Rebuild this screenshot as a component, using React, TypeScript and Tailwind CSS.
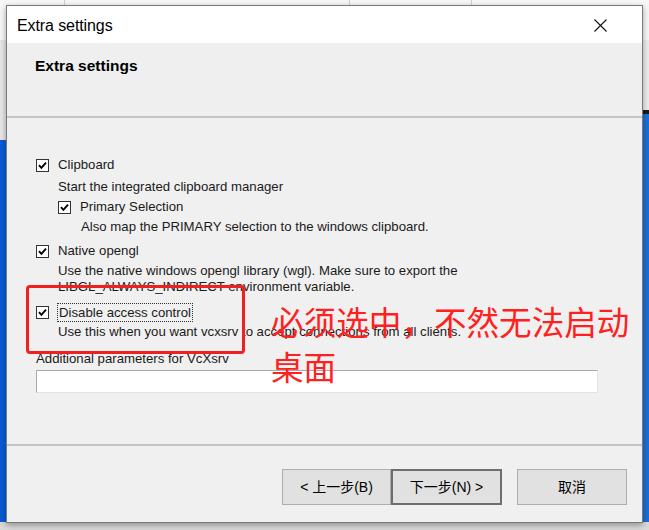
import React from 'react';

const ui = { fontFamily: '"Liberation Sans", Arial, sans-serif' };
const cjk = { fontFamily: '"Liberation Sans", "Noto Sans CJK SC", sans-serif' };

const CheckBox: React.FC = () => (
  <span className="w-[13px] h-[13px] shrink-0 bg-white border border-[#333] flex items-center justify-center">
    <svg width="9" height="9" viewBox="0 0 9 9">
      <path d="M1 4.2 L3.4 6.8 L8 1.6" fill="none" stroke="#000" strokeWidth="1.9" />
    </svg>
  </span>
);

const Option: React.FC<{ label: string; focus?: boolean }> = ({ label, focus }) => (
  <div className="h-[20px] flex items-center">
    <CheckBox />
    <span
      className={
        focus
          ? 'ml-[8px] px-[1px] leading-[17px] border border-dotted border-[#333]'
          : 'ml-[9px] leading-[20px]'
      }
    >
      {label}
    </span>
  </div>
);

const WizButton: React.FC<{ label: string; def?: boolean; w: string }> = ({ label, def, w }) => (
  <button
    className={`${w} h-[36px] flex items-center justify-center bg-[#e1e1e1] text-[14px] text-black ${
      def ? 'border-2 border-[#6e6e6e]' : 'border border-[#adadad]'
    }`}
    style={cjk}
  >
    {label}
  </button>
);

export default function App() {
  return (
    <div className="relative w-[649px] h-[530px] overflow-hidden bg-[#d9d9d9]" style={ui}>
      {/* desktop behind the dialog */}
      <div className="absolute left-0 top-0 w-[649px] h-[40px] bg-[#f7f7f7]">
        <div className="absolute left-[64px] top-0 w-px h-[6px] bg-[#d0d0d0]" />
        <div className="absolute left-[349px] top-0 w-px h-[6px] bg-[#d0d0d0]" />
        <div className="absolute left-[471px] top-0 w-px h-[6px] bg-[#d0d0d0]" />
      </div>
      <div className="absolute left-0 top-[40px] w-[6px] h-[100px] bg-[#e6e6e6]" />
      <div className="absolute left-0 top-[140px] w-[6px] h-[382px] bg-[#0b5bd6]" />
      <div className="absolute right-0 top-[40px] w-[7px] h-[70px] bg-[#ececec]" />
      <div className="absolute right-0 top-[110px] w-[7px] h-[4px] bg-[#1a1a1a]" />
      <div className="absolute right-0 top-[114px] w-[7px] h-[408px] bg-[#1c6fd6]" />

      {/* dialog */}
      <div className="relative ml-[6px] mt-[5px] w-[637px] h-[518px] flex flex-col border border-[#7a7a7a] shadow-[0_2px_6px_rgba(0,0,0,0.35)]">
        <div className="h-[37px] bg-white flex items-center justify-between pl-[10px] pr-[35px] pt-[2px]">
          <span className="text-[16px] text-black tracking-[-0.1px]">Extra settings</span>
          <svg width="13" height="13" viewBox="0 0 13 13">
            <path d="M0.5 0.5 L12.5 12.5 M12.5 0.5 L0.5 12.5" stroke="#111" strokeWidth="1.1" />
          </svg>
        </div>

        <div className="h-[73px] bg-[#efefef] pl-[28px] pt-[11px]">
          <span className="text-[15.5px] font-bold text-black">Extra settings</span>
        </div>
        <div className="h-[2px] bg-[#c4c4c4]" />

        <div className="flex-1 bg-[#f0f0f0] pl-[29px] pt-[37px] text-[13.2px] text-[#1a1a1a]">
          <Option label="Clipboard" />
          <div className="mt-[1px] pl-[22px] leading-[21px]">Start the integrated clipboard manager</div>
          <div className="pl-[22px]">
            <Option label="Primary Selection" />
            <div className="pl-[23px] leading-[20px]">Also map the PRIMARY selection to the windows clipboard.</div>
          </div>
          <div className="mt-[4px]">
            <Option label="Native opengl" />
          </div>
          <div className="mt-[2px] pl-[22px] leading-[16px] w-[432px]">
            Use the native windows opengl library (wgl). Make sure to export the LIBGL_ALWAYS_INDIRECT environment variable.
          </div>
          <div className="mt-[7px]">
            <Option label="Disable access control" focus />
          </div>
          <div className="pl-[22px] leading-[20px]">Use this when you want vcxsrv to accept connections from all clients.</div>
          <div className="mt-[7px] leading-[20px]">Additional parameters for VcXsrv</div>
          <div className="mt-[1px] w-[562px] h-[23px] bg-white border border-[#a9a9a9] border-r-[#e3e3e3] border-b-[#e3e3e3]" />
        </div>

        <div className="h-[2px] bg-[#c4c4c4]" />
        <div className="h-[76px] bg-[#f0f0f0] flex items-start pt-[23px] pl-[275px]">
          <WizButton label="< 上一步(B)" w="w-[109px]" />
          <WizButton label="下一步(N) >" def w="w-[111px]" />
          <div className="ml-[15px]">
            <WizButton label="取消" w="w-[110px]" />
          </div>
        </div>

        {/* red annotation */}
        <div className="absolute left-[19px] top-[279px] w-[219px] h-[69px] border-[3px] border-[#f02020] rounded-[4px]" />
        <div
          className="absolute left-[264px] top-[292px] w-[370px] text-[32.6px] leading-[45px] text-[#ff2020]"
          style={{ fontFamily: '"Noto Sans CJK SC", sans-serif' }}
        >
          必须选中，不然无法启动桌面
        </div>
      </div>
    </div>
  );
}
